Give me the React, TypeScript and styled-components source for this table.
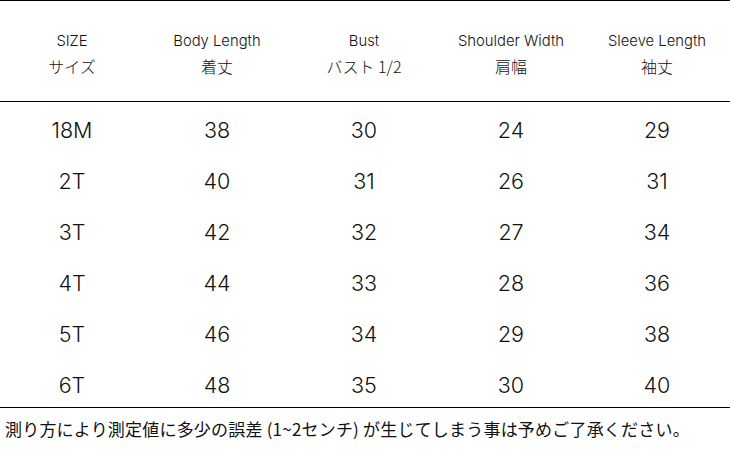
import styled, { createGlobalStyle } from 'styled-components'

const GlobalStyle = createGlobalStyle`
  html, body {
    margin: 0;
    padding: 0;
    background: #ffffff;
  }
  body {
    width: 730px;
    height: 450px;
    overflow: hidden;
  }
`

const latin = `"Century Gothic", "Inter", "Lato", "Noto Sans", sans-serif`
const cjk = `"Noto Sans CJK JP", "Noto Sans", sans-serif`

const Sheet = styled.div`
  width: 730px;
  height: 450px;
  display: flex;
  flex-direction: column;
  background: #ffffff;
  color: #111111;
`

const Table = styled.div`
  display: grid;
  grid-template-columns: 144px 146px 148px 146px 146px;
  border-top: 1px solid #000000;
`

const HeaderCell = styled.div`
  height: 101px;
  display: flex;
  flex-direction: column;
  align-items: center;
  justify-content: center;
  gap: 5px;
  border-bottom: 1px solid #000000;
  padding-top: 6px;
  box-sizing: border-box;
`

const EnLabel = styled.div`
  font-family: ${latin};
  font-weight: 300;
  font-size: 14.8px;
  line-height: 18px;
`

const JaLabel = styled.div`
  font-family: ${cjk};
  font-weight: 300;
  font-size: 16px;
  line-height: 22px;
`

const Cell = styled.div<{ $last?: boolean }>`
  height: 51px;
  display: flex;
  align-items: center;
  justify-content: center;
  font-family: ${latin};
  font-weight: 300;
  font-size: 21.5px;
  padding-top: 5px;
  box-sizing: border-box;
  border-bottom: ${p => (p.$last ? '1px solid #000000' : 'none')};
`

const Note = styled.div`
  flex: 1;
  display: flex;
  align-items: center;
  padding: 0 0 2px 5px;
  font-family: "Meiryo", ${cjk};
  font-size: 17px;
  letter-spacing: 0.2px;
  color: #111111;
  white-space: nowrap;
`

const headers = [
  { en: 'SIZE', ja: 'サイズ' },
  { en: 'Body Length', ja: '着丈' },
  { en: 'Bust', ja: 'バスト 1/2' },
  { en: 'Shoulder Width', ja: '肩幅' },
  { en: 'Sleeve Length', ja: '袖丈' },
]

const rows = [
  ['18M', '38', '30', '24', '29'],
  ['2T', '40', '31', '26', '31'],
  ['3T', '42', '32', '27', '34'],
  ['4T', '44', '33', '28', '36'],
  ['5T', '46', '34', '29', '38'],
  ['6T', '48', '35', '30', '40'],
]

export default function App() {
  return (
    <>
      <GlobalStyle />
      <Sheet>
        <Table>
          {headers.map(h => (
            <HeaderCell key={h.en}>
              <EnLabel>{h.en}</EnLabel>
              <JaLabel>{h.ja}</JaLabel>
            </HeaderCell>
          ))}
          {rows.map((row, i) =>
            row.map((v, j) => (
              <Cell key={`${i}-${j}`} $last={i === rows.length - 1}>
                {v}
              </Cell>
            ))
          )}
        </Table>
        <Note>
          測り方により測定値に多少の誤差 (1~2センチ) が生じてしまう事は予めご了承ください。
        </Note>
      </Sheet>
    </>
  )
}
